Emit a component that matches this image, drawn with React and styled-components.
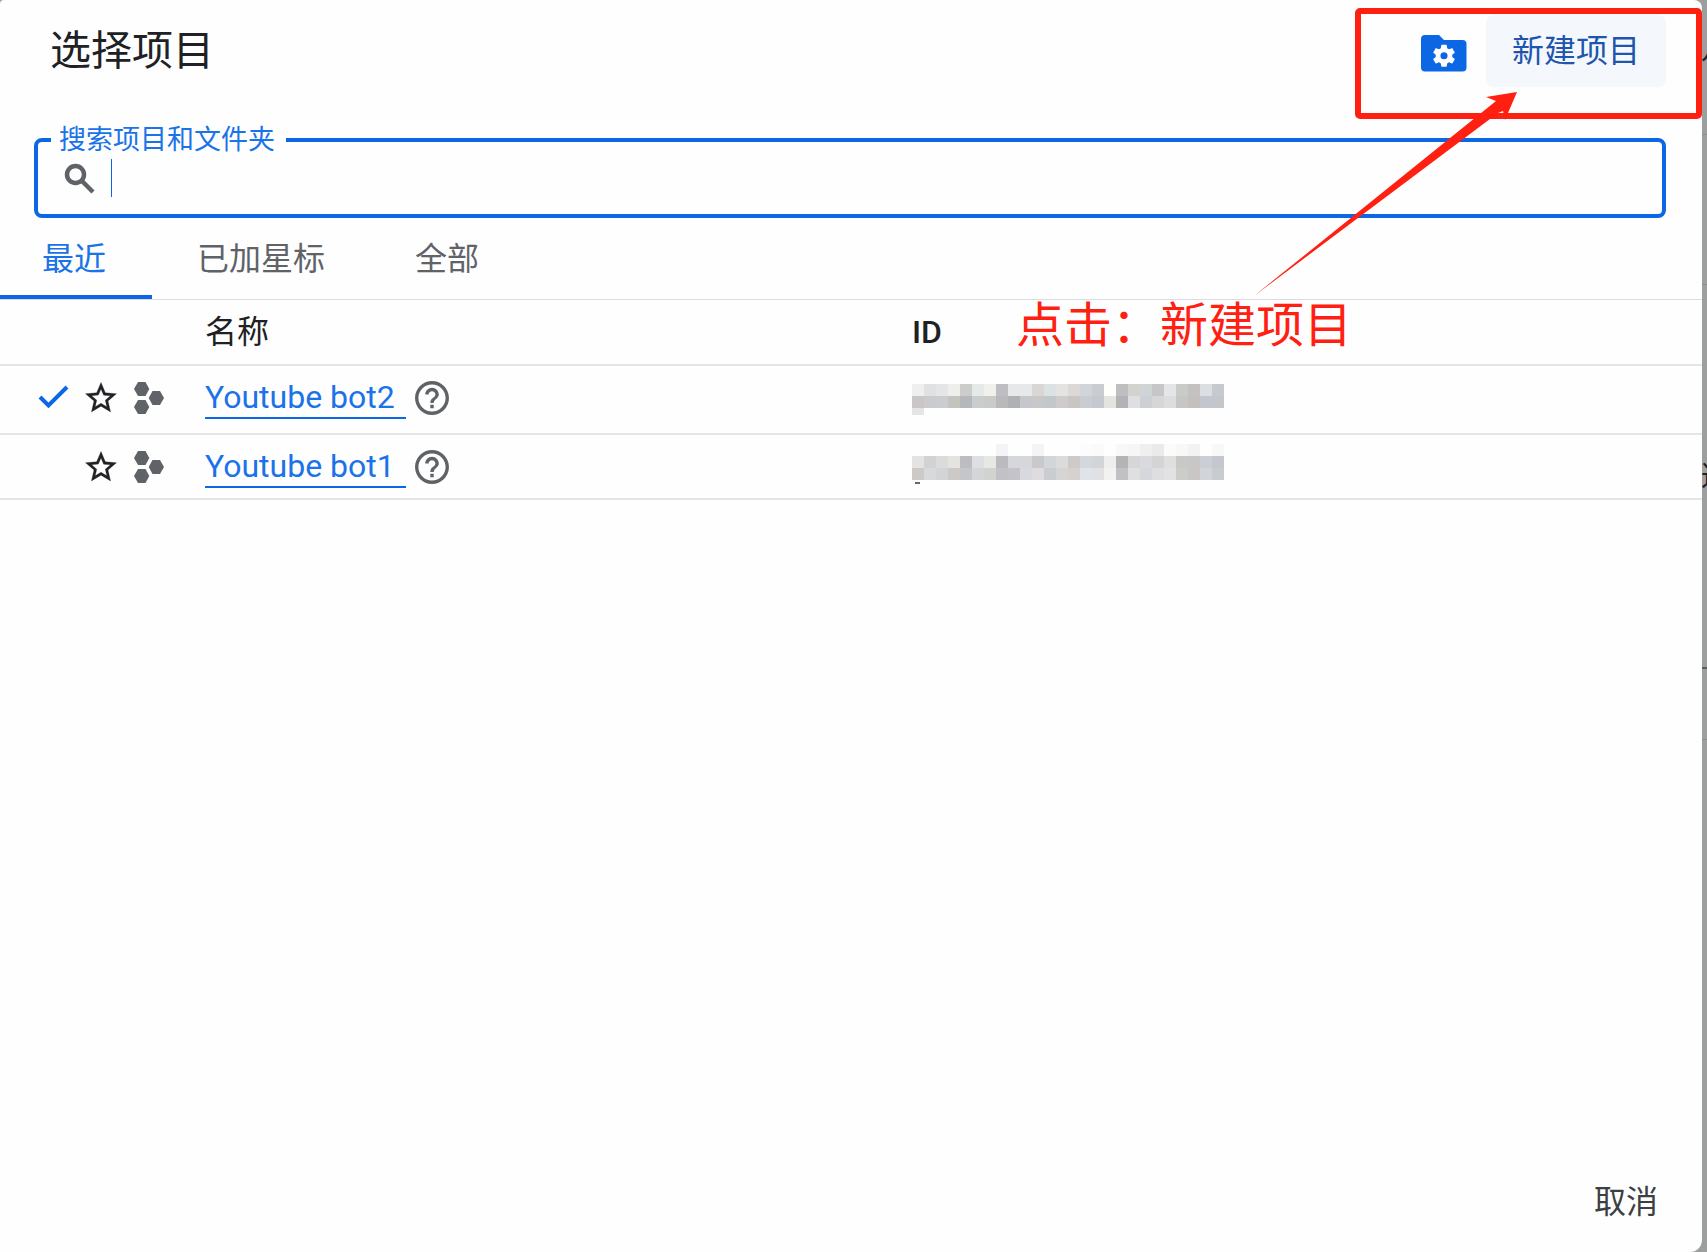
import React from 'react';
import styled, { createGlobalStyle } from 'styled-components';

const GlobalStyle = createGlobalStyle`
  *, *::before, *::after { box-sizing: border-box; }
  body { margin: 0; background: #9d9f9f; }
  button, input { font: inherit; }
`;

const Page = styled.div`
  position: relative;
  min-height: 100vh;
  padding-right: 5px;
  display: flex;
  overflow: hidden;
  font-family: Roboto, "Noto Sans CJK SC", sans-serif;
  font-size: 32px;
  line-height: 40px;
  color: #202124;
`;

const Behind = styled.div`
  position: absolute;
  inset: 0 0 0 auto;
  width: 5px;
  overflow: hidden;
`;

const BehindRule = styled.div`
  position: absolute;
  top: ${(p) => p.$top}px;
  width: 100%;
  height: ${(p) => (p.$dark ? 2 : 1)}px;
  background: ${(p) => (p.$dark ? '#5c5e60' : '#8b8d8e')};
`;

const BehindText = styled.span`
  position: absolute;
  left: -1px;
  top: ${(p) => p.$top}px;
  font-size: 28px;
`;

const Dialog = styled.main`
  position: relative;
  flex: 1;
  min-width: 0;
  display: flex;
  flex-direction: column;
  background: #fefefe;
  border-radius: 4px 8px 12px 0;
`;

const Header = styled.header`
  display: flex;
  align-items: flex-start;
  justify-content: space-between;
  padding: 15px 36px 0 50px;
`;

const Title = styled.h1`
  margin: 0;
  padding-top: 8px;
  font-size: 41px;
  line-height: 56px;
  font-weight: 400;
`;

const Actions = styled.div`
  display: flex;
  align-items: center;
  gap: 19px;
`;

const IconButton = styled.button`
  display: flex;
  align-items: center;
  padding: ${(p) => p.$padTop || 0}px 0 0;
  border: 0;
  background: none;
  color: #202124;
  cursor: pointer;
`;

const NewProject = styled.button`
  height: 72px;
  padding: 0 26px;
  border: 0;
  border-radius: 8px;
  background: #f4f8fd;
  color: #1f55ad;
  cursor: pointer;
`;

const SearchBox = styled.fieldset`
  height: 92px;
  margin: 39px 36px 0 34px;
  padding: 4px 24px 0 26px;
  border: 4px solid #0b67e3;
  border-radius: 8px;
  min-width: 0;
`;

const SearchLine = styled.div`
  display: flex;
  align-items: center;
  gap: 16px;
`;

const Legend = styled.legend`
  margin-left: -13px;
  padding: 0 11px 0 8px;
  font-size: 27px;
  line-height: 28px;
  color: #1a73e8;
`;

const SearchInput = styled.input`
  flex: 1;
  min-width: 0;
  height: 40px;
  padding: 0;
  border: 0;
  outline: 0;
  background: transparent;
  color: #202124;
  caret-color: transparent;
`;

const Caret = styled.span`
  width: 1px;
  height: 38px;
  background: #0b67e3;
`;

const Tabs = styled.div`
  display: flex;
  height: 82px;
  border-bottom: 1px solid #dadce0;
`;

const Tab = styled.button`
  padding: ${(p) => (p.$active ? '4px 46px 0 42px' : '0 45px')};
  border: 0;
  border-bottom: ${(p) => (p.$active ? '4px solid #0b67e3' : '0')};
  background: none;
  color: ${(p) => (p.$active ? '#1a73e8' : '#5f6368')};
  cursor: pointer;
`;

const Table = styled.table`
  width: 100%;
  border-collapse: collapse;
  table-layout: fixed;
`;

const Row = styled.tr`
  height: ${(p) => p.$height}px;
  border-bottom: 2px solid #e4e5e8;
`;

const HeadCell = styled.th`
  padding: 0;
  width: ${(p) => p.$width || 'auto'};
  text-align: left;
  font-weight: ${(p) => (p.$strong ? 500 : 400)};
`;

const Cell = styled.td`
  padding: 0 0 ${(p) => p.$lift || 0}px;
`;

const MosaicCell = styled.td`
  padding: ${(p) => p.$pad}px 0 0;
  vertical-align: top;
`;

const Marks = styled.div`
  display: grid;
  grid-template-columns: 32px 34px 32px;
  column-gap: 15px;
  align-items: center;
  padding-left: 37px;
`;

const NameLine = styled.div`
  display: flex;
  align-items: center;
  gap: 8px;
`;

const ProjectLink = styled.a`
  width: 201px;
  border-bottom: 2px solid #0b67e3;
  color: #1a73e8;
  text-decoration: none;
  white-space: nowrap;
`;

const Mosaic = styled.svg`
  display: block;
`;

const Footer = styled.footer`
  display: flex;
  justify-content: flex-end;
  margin-top: auto;
  padding: 0 44px 30px;
`;

const Cancel = styled.button`
  padding: 0;
  border: 0;
  background: none;
  color: #3c4043;
  cursor: pointer;
`;

const Highlight = styled.div`
  position: absolute;
  top: 8px;
  right: 5px;
  width: 347px;
  height: 111px;
  border: 6px solid #ff2012;
  border-radius: 5px;
  pointer-events: none;
`;

const Arrow = styled.svg`
  position: absolute;
  top: 90px;
  right: 187px;
  pointer-events: none;
`;

const Note = styled.p`
  position: absolute;
  top: 298px;
  right: 355px;
  margin: 0;
  font-size: 48px;
  line-height: 56px;
  color: #ff2012;
  white-space: nowrap;
`;

const FolderGear = () => (
  <svg width="46" height="37" viewBox="0 0 46 37" aria-hidden="true">
    <path fill="#0b67e3" d="M4 0h14l5 5h18.500a4 4 0 0 1 4 4v23.500a4 4 0 0 1-4 4H4a4 4 0 0 1-4-4V4a4 4 0 0 1 4-4z" />
    <g transform="translate(9.200 7) scale(1.150)">
      <path fill="#fff" d="M19.140 12.940c.04-.3.06-.61.06-.94 0-.32-.02-.64-.07-.94l2.030-1.580c.18-.14.23-.41.12-.61l-1.920-3.320c-.12-.22-.37-.29-.59-.22l-2.390.96c-.5-.38-1.030-.7-1.620-.94l-.36-2.540c-.04-.24-.24-.41-.48-.41h-3.840c-.24 0-.43.17-.47.41l-.36 2.540c-.59.24-1.130.57-1.620.94l-2.390-.96c-.22-.08-.47 0-.59.22L2.740 8.870c-.12.21-.08.47.12.61l2.030 1.580c-.05.3-.09.63-.09.94s.02.64.07.94l-2.030 1.580c-.18.14-.23.41-.12.61l1.920 3.320c.12.22.37.29.59.22l2.390-.96c.5.38 1.030.7 1.620.94l.36 2.540c.05.24.24.41.48.41h3.840c.24 0 .44-.17.47-.41l.36-2.540c.59-.24 1.130-.56 1.620-.94l2.390.96c.22.08.47 0 .59-.22l1.920-3.320c.12-.22.07-.47-.12-.61l-2.010-1.580zM12 15.100a3.100 3.100 0 1 1 0-6.200 3.100 3.100 0 0 1 0 6.200z" />
    </g>
  </svg>
);

const SearchIcon = () => (
  <svg width="31" height="31" viewBox="0 0 31 31" aria-hidden="true">
    <g fill="none" stroke="#5f6368" strokeWidth="4.500">
      <circle cx="11.500" cy="11.500" r="8.500" />
      <path d="M17.500 17.500L29 29" />
    </g>
  </svg>
);

const CheckIcon = () => (
  <svg width="32" height="32" viewBox="0 0 32 32" role="img" aria-label="当前项目">
    <path fill="none" stroke="#0b67e3" strokeWidth="4" d="M3 15l8.500 8.500L30 5" />
  </svg>
);

const StarIcon = () => (
  <svg width="34" height="34" viewBox="1 1 22 22" aria-hidden="true">
    <path
      fill="currentColor"
      stroke="currentColor"
      strokeWidth=".2"
      d="M22 9.240l-7.190-.62L12 2 9.190 8.630 2 9.240l5.460 4.730L5.820 21 12 17.270 18.180 21l-1.630-7.030L22 9.240zM12 15.400l-3.760 2.270 1-4.280-3.320-2.880 4.380-.38L12 6.100l1.710 4.040 4.380.38-3.320 2.880 1 4.280L12 15.400z"
    />
  </svg>
);

const ProjectIcon = () => (
  <svg width="32" height="32" viewBox="-1 0 32 32" aria-hidden="true">
    <g fill="#5f6368">
      <path d="M4 0h7.500l3.800 7-3.800 7H4L0 7z" />
      <path d="M4 18h7.500l3.800 7-3.800 7H4L0 25z" />
      <path d="M18.500 9H26l4 7-4 7h-7.500l-3.800-7z" />
    </g>
  </svg>
);

const HelpIcon = () => (
  <svg width="36" height="36" viewBox="1.400 1.400 21.200 21.200" aria-hidden="true">
    <path fill="#5f6368" d="M11 18h2v-2h-2v2zm1-16C6.480 2 2 6.480 2 12s4.480 10 10 10 10-4.480 10-10S17.520 2 12 2zm0 18c-4.410 0-8-3.590-8-8s3.590-8 8-8 8 3.590 8 8-3.590 8-8 8zm0-14c-2.210 0-4 1.790-4 4h2c0-1.100.9-2 2-2s2 .9 2 2c0 2-3 1.750-3 5h2c0-2.250 3-2.500 3-5 0-2.210-1.790-4-4-4z" />
  </svg>
);

const projects = [
  {
    name: 'Youtube bot2',
    selected: true,
    height: 69,
    cells: [
      'efefef e1e1e1 e4e5e6 eeefed cccccb e4e9e9 eff1ea bebdc1 e6e8ea e6e8ea dad6d6 dce1e4 e4e3e2 ddd8d8 d1d5db cbccd1 fefffd bebdbf d2d2cf cfd4d7 c8c5c8 e3e5e7 c9cbc8 c3c1c1 dbdfe2 c6c9cf',
      'cac6c5 cacbcf cbcccf c4c3be b6b7ba c9cdcd cacac8 bab8b9 b0b1b5 c5c7cc cac7c8 c3c7ca cdcbcd c9c5c2 cbccd1 c4c8cf e3e3e0 b3b3b6 dedfe2 cecfd5 d6d6d9 dddddd c6c7c4 c3c0bd c2c6ce c3c7ca',
      'e5e5e5',
    ],
  },
  {
    name: 'Youtube bot1',
    selected: false,
    height: 65,
    cells: [
      'fefefe fefefe fefefe fefefe fefefe fefefe fefefe f4f4f6 fefefe fefefe f4f4f4 fefefe fefefe fefefe fcfcfc fafafa fefefe f8f8f8 f6f6f5 efefef eaeaea fbfbfb f8f8f8 f2f2f2 fefefe f8f8f8',
      'e4e3e2 d2d2d3 dadbdd e4e3df bdbcc0 dde0e3 e7e8e3 bbbac0 d6d7dc d6d7da cbc8ca d2d6d9 dbdbdc cfcac8 d4d7de d3d4d8 eeeeee b4b3b6 d6d6d7 d9dade d5d4d4 dfdfdf c8c8c5 c8c6c6 cbced5 c4c7cd',
      'cdc9c8 d8d9db d3d4d6 cbcac6 c5c6cb d3d5d6 d1d3d1 c3c1c5 c3c3c9 d7d9de dedcde cacdd0 d5d5d5 d5d1cf e0e3e9 e1e1e4 f2f2f0 c1c0c3 dfdfe1 d6d7dc dedee0 e2e2e2 cbcdca c9c6c6 d1d4d8 c9ccce',
    ],
    tail: true,
  },
];

const Redacted = ({ rows, tail }) => (
  <Mosaic width="312" height="40" shapeRendering="crispEdges" role="img" aria-label="项目 ID 已隐藏">
    {rows.map((line, y) =>
      line.split(' ').map((c, x) => (
        <rect key={`${x}-${y}`} x={x * 12} y={y * 12} width="12" height={line.length < 8 ? 7 : 12} fill={`#${c}`} />
      ))
    )}
    {tail && <rect x="3" y="38" width="5" height="2" fill="#66666e" />}
  </Mosaic>
);

export default function App() {
  return (
    <Page>
      <GlobalStyle />
      <Behind aria-hidden="true">
        <BehindText $top={30}>儿</BehindText>
        <BehindRule $top={134} />
        <BehindRule $top={284} />
        <BehindText $top={457}>这</BehindText>
        <BehindRule $top={667} $dark />
        <BehindRule $top={739} />
      </Behind>
      <Dialog>
        <Header>
          <Title>选择项目</Title>
          <Actions>
            <IconButton $padTop={4} aria-label="管理资源"><FolderGear /></IconButton>
            <NewProject>新建项目</NewProject>
          </Actions>
        </Header>
        <SearchBox>
          <Legend><label htmlFor="search">搜索项目和文件夹</label></Legend>
          <SearchLine>
            <SearchIcon />
            <Caret />
            <SearchInput id="search" type="text" />
          </SearchLine>
        </SearchBox>
        <Tabs role="tablist">
          <Tab role="tab" aria-selected="true" $active>最近</Tab>
          <Tab role="tab" aria-selected="false">已加星标</Tab>
          <Tab role="tab" aria-selected="false">全部</Tab>
        </Tabs>
        <Table>
          <thead>
            <Row $height={65}>
              <HeadCell $width="205px" aria-label="状态" />
              <HeadCell $width="707px">名称</HeadCell>
              <HeadCell $strong>ID</HeadCell>
            </Row>
          </thead>
          <tbody>
            {projects.map((p) => (
              <Row key={p.name} $height={p.height}>
                <Cell $lift={p.selected ? 4 : 0}>
                  <Marks>
                    {p.selected ? <CheckIcon /> : <span />}
                    <IconButton aria-label={`为 ${p.name} 加星标`}><StarIcon /></IconButton>
                    <ProjectIcon />
                  </Marks>
                </Cell>
                <Cell $lift={p.selected ? 4 : 0}>
                  <NameLine>
                    <ProjectLink href="#">{p.name}</ProjectLink>
                    <IconButton aria-label="帮助"><HelpIcon /></IconButton>
                  </NameLine>
                </Cell>
                <MosaicCell $pad={p.selected ? 18 : 9}><Redacted rows={p.cells} tail={p.tail} /></MosaicCell>
              </Row>
            ))}
          </tbody>
        </Table>
        <Footer><Cancel>取消</Cancel></Footer>
      </Dialog>
      <Highlight />
      <Arrow width="266" height="208" viewBox="0 0 266 208" aria-hidden="true">
        <path fill="#ff2012" d="M0 206L242 11l-10-4 31-5-12 28-2-9-5 2z" />
      </Arrow>
      <Note>点击：新建项目</Note>
    </Page>
  );
}
